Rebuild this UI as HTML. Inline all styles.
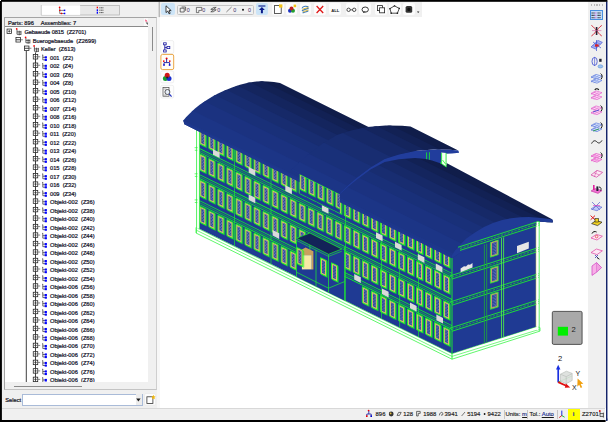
<!DOCTYPE html>
<html><head><meta charset="utf-8"><title>Model viewer</title>
<style>
*{margin:0;padding:0;box-sizing:border-box}
html,body{width:609px;height:422px;overflow:hidden;background:#fff}
body{position:relative;font-family:"Liberation Sans",sans-serif;font-size:5.7px;color:#1a1a2a;line-height:8px}
.abs{position:absolute}
.gl{position:absolute;width:0.8px;background:#444}
.eb{position:absolute;width:4.7px;height:4.7px;border:0.55px solid #666;background:#fff}
.eb i.h{position:absolute;left:0.55px;top:1.5px;width:2.5px;height:0.6px;background:#111}
.eb i.v{position:absolute;left:1.5px;top:0.55px;width:0.6px;height:2.5px;background:#111}
.dash{position:absolute;width:2.2px;height:0.8px;background:#555}
.ic{position:absolute;overflow:visible}
.tt{position:absolute;white-space:nowrap;height:8px;line-height:8px;color:#14142a;-webkit-text-stroke:0.22px #14142a}
.btn{position:absolute;background:#fcfcfc;border-radius:2px}
.sb{position:absolute;top:409px;height:10px;line-height:10px;font-size:5.9px;white-space:nowrap;color:#1a1a1a;-webkit-text-stroke:0.15px #1a1a1a}
</style></head><body>

<svg class="abs" style="left:0;top:0" width="609" height="422" viewBox="0 0 609 422">
<defs>
<clipPath id="cf"><polygon points="196.0,0.0 453.0,0.0 453.0,400.0 196.0,400.0"/></clipPath>
<g id="win"><rect x="0.9" y="-15.6" width="6" height="16" fill="none" stroke="#14f024" stroke-width="0.45"/><rect x="0" y="-16" width="6" height="16" fill="#d4bc6c" stroke="#10ff20" stroke-width="0.75"/><rect x="1.6" y="-14.4" width="2.8" height="12.8" fill="#1f3894"/><path d="M2.45 -14.1V-1.7M3.65 -14.1V-1.7" stroke="#a0acde" stroke-width="0.7" stroke-dasharray="0.7 0.8"/></g>
</defs>
<polygon points="196.0,227.4 452.0,353.6 536.5,326.6 540.0,327.6 540.0,331.1 452.0,359.2 196.0,233.0" fill="#fff" stroke="#1cf42c" stroke-width="0.7"/>
<path d="M196.0 230.0L452.0 356.4L540.0 329.2" stroke="#1cf42c" stroke-width="0.6" fill="none"/>
<g id="facade" clip-path="url(#cf)"><polygon points="197.0,227.4 452.0,353.6 452.0,249.2 197.0,123.0" fill="#1f3a93"/><g transform="matrix(1 0.4950 0 1 0 0)">
<use href="#win" x="199.80" y="123.3"/>
<use href="#win" x="208.83" y="123.3"/>
<use href="#win" x="217.86" y="123.3"/>
<use href="#win" x="226.89" y="123.3"/>
<use href="#win" x="235.92" y="123.3"/>
<use href="#win" x="244.95" y="123.3"/>
<use href="#win" x="253.98" y="123.3"/>
<use href="#win" x="263.01" y="123.3"/>
<use href="#win" x="272.04" y="123.3"/>
<use href="#win" x="281.07" y="123.3"/>
<use href="#win" x="290.10" y="123.3"/>
<use href="#win" x="299.13" y="123.3"/>
<use href="#win" x="308.16" y="123.3"/>
<use href="#win" x="317.19" y="123.3"/>
<use href="#win" x="326.22" y="123.3"/>
<use href="#win" x="335.25" y="123.3"/>
<use href="#win" x="362.34" y="123.3"/>
<use href="#win" x="371.37" y="123.3"/>
<use href="#win" x="380.40" y="123.3"/>
<use href="#win" x="389.43" y="123.3"/>
<use href="#win" x="398.46" y="123.3"/>
<use href="#win" x="407.49" y="123.3"/>
<use href="#win" x="416.52" y="123.3"/>
<use href="#win" x="425.55" y="123.3"/>
<use href="#win" x="434.58" y="123.3"/>
<use href="#win" x="443.61" y="123.3"/>
<path d="M196 105.8H453M196 101.9H453" stroke="#10ff20" stroke-width="0.85"/>
<path d="M196 103.9H453" stroke="#18d030" stroke-width="0.55"/>
<use href="#win" x="199.80" y="97.2"/>
<use href="#win" x="208.83" y="97.2"/>
<use href="#win" x="217.86" y="97.2"/>
<use href="#win" x="226.89" y="97.2"/>
<use href="#win" x="235.92" y="97.2"/>
<use href="#win" x="244.95" y="97.2"/>
<use href="#win" x="253.98" y="97.2"/>
<use href="#win" x="263.01" y="97.2"/>
<use href="#win" x="272.04" y="97.2"/>
<use href="#win" x="281.07" y="97.2"/>
<use href="#win" x="290.10" y="97.2"/>
<use href="#win" x="299.13" y="97.2"/>
<use href="#win" x="308.16" y="97.2"/>
<use href="#win" x="317.19" y="97.2"/>
<use href="#win" x="326.22" y="97.2"/>
<use href="#win" x="335.25" y="97.2"/>
<use href="#win" x="344.28" y="97.2"/>
<use href="#win" x="353.31" y="97.2"/>
<use href="#win" x="362.34" y="97.2"/>
<use href="#win" x="371.37" y="97.2"/>
<use href="#win" x="380.40" y="97.2"/>
<use href="#win" x="389.43" y="97.2"/>
<use href="#win" x="398.46" y="97.2"/>
<use href="#win" x="407.49" y="97.2"/>
<use href="#win" x="416.52" y="97.2"/>
<use href="#win" x="425.55" y="97.2"/>
<use href="#win" x="434.58" y="97.2"/>
<use href="#win" x="443.61" y="97.2"/>
<path d="M196 79.7H453M196 75.8H453" stroke="#10ff20" stroke-width="0.85"/>
<path d="M196 77.8H453" stroke="#18d030" stroke-width="0.55"/>
<use href="#win" x="199.80" y="71.1"/>
<use href="#win" x="208.83" y="71.1"/>
<use href="#win" x="217.86" y="71.1"/>
<use href="#win" x="226.89" y="71.1"/>
<use href="#win" x="235.92" y="71.1"/>
<use href="#win" x="244.95" y="71.1"/>
<use href="#win" x="253.98" y="71.1"/>
<use href="#win" x="263.01" y="71.1"/>
<use href="#win" x="272.04" y="71.1"/>
<use href="#win" x="281.07" y="71.1"/>
<use href="#win" x="290.10" y="71.1"/>
<use href="#win" x="299.13" y="71.1"/>
<use href="#win" x="308.16" y="71.1"/>
<use href="#win" x="317.19" y="71.1"/>
<use href="#win" x="326.22" y="71.1"/>
<use href="#win" x="335.25" y="71.1"/>
<use href="#win" x="344.28" y="71.1"/>
<use href="#win" x="353.31" y="71.1"/>
<use href="#win" x="362.34" y="71.1"/>
<use href="#win" x="371.37" y="71.1"/>
<use href="#win" x="380.40" y="71.1"/>
<use href="#win" x="389.43" y="71.1"/>
<use href="#win" x="398.46" y="71.1"/>
<use href="#win" x="407.49" y="71.1"/>
<use href="#win" x="416.52" y="71.1"/>
<use href="#win" x="425.55" y="71.1"/>
<use href="#win" x="434.58" y="71.1"/>
<use href="#win" x="443.61" y="71.1"/>
<path d="M196 53.6H453M196 49.7H453" stroke="#10ff20" stroke-width="0.85"/>
<path d="M196 51.7H453" stroke="#18d030" stroke-width="0.55"/>
<use href="#win" x="199.80" y="45.0"/>
<use href="#win" x="208.83" y="45.0"/>
<use href="#win" x="217.86" y="45.0"/>
<use href="#win" x="226.89" y="45.0"/>
<use href="#win" x="235.92" y="45.0"/>
<use href="#win" x="244.95" y="45.0"/>
<use href="#win" x="253.98" y="45.0"/>
<use href="#win" x="263.01" y="45.0"/>
<use href="#win" x="272.04" y="45.0"/>
<use href="#win" x="281.07" y="45.0"/>
<use href="#win" x="290.10" y="45.0"/>
<use href="#win" x="299.13" y="45.0"/>
<use href="#win" x="308.16" y="45.0"/>
<use href="#win" x="317.19" y="45.0"/>
<use href="#win" x="326.22" y="45.0"/>
<use href="#win" x="335.25" y="45.0"/>
<use href="#win" x="344.28" y="45.0"/>
<use href="#win" x="353.31" y="45.0"/>
<use href="#win" x="362.34" y="45.0"/>
<use href="#win" x="371.37" y="45.0"/>
<use href="#win" x="380.40" y="45.0"/>
<use href="#win" x="389.43" y="45.0"/>
<use href="#win" x="398.46" y="45.0"/>
<use href="#win" x="407.49" y="45.0"/>
<use href="#win" x="416.52" y="45.0"/>
<use href="#win" x="425.55" y="45.0"/>
<use href="#win" x="434.58" y="45.0"/>
<use href="#win" x="443.61" y="45.0"/>
<path d="M197.4 25.5V129.9" stroke="#1cf42c" stroke-width="0.55"/>
<path d="M234.5 25.5V129.9" stroke="#1cf42c" stroke-width="0.55"/>
<path d="M271.0 25.5V129.9" stroke="#1cf42c" stroke-width="0.55"/>
<path d="M345.5 25.5V129.9" stroke="#1cf42c" stroke-width="0.55"/>
<path d="M381.5 25.5V129.9" stroke="#1cf42c" stroke-width="0.55"/>
<path d="M399.6 25.5V129.9" stroke="#1cf42c" stroke-width="0.55"/>
<path d="M418.5 25.5V129.9" stroke="#1cf42c" stroke-width="0.55"/>
</g></g>
<polygon points="213.0,149.2 219.6,152.5 219.6,158.1 213.0,154.8" fill="#dadada"/>
<polygon points="248.7,167.0 255.3,170.3 255.3,175.9 248.7,172.6" fill="#dadada"/>
<polygon points="285.3,185.3 291.9,188.6 291.9,194.2 285.3,190.9" fill="#dadada"/>
<polygon points="248.7,194.4 255.3,197.7 255.3,203.3 248.7,200.0" fill="#dadada"/>
<polygon points="321.9,204.9 328.5,208.2 328.5,213.8 321.9,210.5" fill="#dadada"/>
<polygon points="376.0,232.3 382.6,235.6 382.6,241.2 376.0,237.9" fill="#dadada"/>
<polygon points="395.0,241.7 401.6,245.0 401.6,250.6 395.0,247.3" fill="#dadada"/>
<polygon points="417.8,254.0 424.4,257.3 424.4,262.9 417.8,259.6" fill="#dadada"/>
<polygon points="435.8,263.6 442.4,266.9 442.4,272.5 435.8,269.2" fill="#dadada"/>
<polygon points="354.2,274.0 360.8,277.3 360.8,282.9 354.2,279.6" fill="#dadada"/>
<polygon points="382.0,288.5 388.6,291.8 388.6,297.4 382.0,294.1" fill="#dadada"/>
<polygon points="410.0,302.6 416.6,305.9 416.6,311.5 410.0,308.2" fill="#dadada"/>
<polygon points="436.4,314.6 443.0,317.9 443.0,323.5 436.4,320.2" fill="#dadada"/>
<polygon points="272.6,230.0 279.2,233.3 279.2,238.9 272.6,235.6" fill="#dadada"/>
<rect x="196.6" y="130.6" width="2.8" height="98.0" fill="#f2fff2"/>
<path d="M196.5 130V233.0M199.5 131.5V228.6" stroke="#3cf04a" stroke-width="0.8"/>
<path d="M194.6 199.9h3M194.8 202.5h2.6" stroke="#30f03a" stroke-width="0.7"/>
<path d="M194.6 173.8h3M194.8 176.4h2.6" stroke="#30f03a" stroke-width="0.7"/>
<path d="M194.6 147.7h3M194.8 150.3h2.6" stroke="#30f03a" stroke-width="0.7"/>
<polygon points="296.5,238.3 309.9,233.0 344.5,250.3 344.5,300.6 296.5,276.8" fill="#1f3a93"/>
<path d="M296.5 240V276.6M316 250V286.4M328.5 254.3V292.6M344.5 247V300.6M309.9 236V250" stroke="#1cf42c" stroke-width="0.7" fill="none"/>
<path d="M296.5 272.2L328.5 288.2L344.5 281.6" stroke="#1cf42c" stroke-width="0.7" fill="none"/>
<polygon points="296.5,238.3 309.9,233.0 341.8,249.0 328.5,254.3" fill="#132358" stroke="#1cf42c" stroke-width="0.7"/>
<path d="M296.5 240.4L328.5 256.4L341.8 251.2" stroke="#1cf42c" stroke-width="0.6" fill="none"/>
<polygon points="301.9,249.4 305.6,247.4 313.4,251.2 313.4,269.6 311.6,269.4 311.6,255.2 301.9,255.2" fill="#c9a05e"/>
<rect x="301.9" y="255.2" width="9.7" height="14.2" fill="#f7e8a6"/>
<g transform="matrix(1 0.4950 0 1 0 0)">
<use href="#win" x="296.9" y="116.5"/>
<use href="#win" x="320.5" y="115.0"/>
<use href="#win" x="331.5" y="114.7"/>
</g>
<polygon points="452.0,353.6 536.0,326.7 536.0,214.3 452.0,249.2" fill="#1f3a93"/>
<g transform="matrix(1 -0.3200 0 1 0 0)"><path d="M450.0 472.1H539M452.0 475.9H539" stroke="#1cf42c" stroke-width="0.8"/><path d="M452.0 474.0H539" stroke="#22b83a" stroke-width="0.9" stroke-dasharray="2.2 1.2"/><path d="M450.0 446.0H539M452.0 449.8H539" stroke="#1cf42c" stroke-width="0.8"/><path d="M452.0 447.9H539" stroke="#22b83a" stroke-width="0.9" stroke-dasharray="2.2 1.2"/><path d="M450.0 419.9H539M452.0 423.7H539" stroke="#1cf42c" stroke-width="0.8"/><path d="M452.0 421.8H539" stroke="#22b83a" stroke-width="0.9" stroke-dasharray="2.2 1.2"/></g>
<g transform="matrix(1 -0.3200 0 1 0 0)">
<defs><g id="win2"><rect x="0" y="-15" width="7.8" height="15" fill="#b9a36a" stroke="#1cf42c" stroke-width="0.7"/><rect x="1.7" y="-13.5" width="4.4" height="12" fill="#223c98"/><path d="M2.7 -13V-1.8M3.9 -13V-1.8M5.1 -13V-1.8" stroke="#8b97cf" stroke-width="0.7" stroke-dasharray="0.7 0.8"/></g></defs>
<use href="#win2" x="490.4" y="466.3"/>
<use href="#win2" x="490.4" y="440.2"/>
<use href="#win2" x="490.4" y="414.1"/>
<path d="M484.4 389.9V498.3M486.7 389.9V498.3" stroke="#1fae35" stroke-width="0.7"/>
<path d="M501.5 389.9V498.3M503.6 389.9V498.3" stroke="#4fe84a" stroke-width="0.8"/>
</g>
<polygon points="460.6,268.4 464.0,266.2 466.0,266.6 468.0,264.4 470.0,264.8 472.5,263.0 472.5,267.4 460.6,272.2" fill="#e6e6e6"/>
<polygon points="517.0,246.0 528.8,241.8 528.8,248.6 517.0,253.2" fill="#e6e6e6"/>
<path d="M452 257.2V359.2" stroke="#1cf42c" stroke-width="0.9"/>
<path d="M536.2 222V327" stroke="#d8d070" stroke-width="0.8"/>
<path d="M537.5 222V330" stroke="#ffffff" stroke-width="1.8"/>
<path d="M539.2 221V331" stroke="#5cf06a" stroke-width="1.0"/>
<defs><clipPath id="cr"><polygon points="183.3,120.6 186.0,117.3 190.0,113.2 195.0,108.6 200.0,104.5 206.0,100.4 212.0,96.8 218.0,93.6 224.0,90.8 232.0,87.5 240.0,84.8 248.0,82.8 256.0,81.6 262.0,81.3 268.0,81.5 274.0,82.1 280.0,83.1 364.5,124.9 446.5,165.5 446.5,163.0 551.6,219.0 553.0,221.0 552.6,222.6 552.8,222.6 545.0,221.9 536.5,221.6 536.5,225.0 459.0,253.5 452.0,258.3 184.2,124.2"/></clipPath>
<clipPath id="cr2"><polygon points="291.7,170.0 292.9,168.6 300.2,161.6 308.5,154.3 322.7,143.6 336.9,135.0 351.1,130.6 367.2,127.1 385.6,125.4 402.2,125.7 410.5,126.5 458.3,150.5 450.0,149.7 433.4,149.4 415.0,151.1 398.9,154.6 384.7,159.0 370.5,167.6 356.3,178.3 348.0,185.6 340.7,192.6 339.5,194.0"/></clipPath>
<clipPath id="cbay"><polygon points="299.6,173.8 339.8,193.8 339.8,213.8 299.6,193.9"/></clipPath></defs>
<g clip-path="url(#cr)"><polygon points="170.0,23.9 570.0,221.8 570.0,234.9 170.0,37.0" fill="#101d4a"/><polygon points="170.0,35.2 570.0,233.1 570.0,242.4 170.0,44.5" fill="#122154"/><polygon points="170.0,42.7 570.0,240.6 570.0,252.0 170.0,54.1" fill="#14255e"/><polygon points="170.0,52.3 570.0,250.2 570.0,261.6 170.0,63.7" fill="#162968"/><polygon points="170.0,61.9 570.0,259.8 570.0,272.3 170.0,74.4" fill="#182d71"/><polygon points="170.0,72.6 570.0,270.5 570.0,284.0 170.0,86.1" fill="#193079"/><polygon points="170.0,84.3 570.0,282.2 570.0,299.0 170.0,101.1" fill="#1b3280"/><polygon points="170.0,99.3 570.0,297.2 570.0,313.1 170.0,115.2" fill="#1c3586"/><polygon points="170.0,113.4 570.0,311.3 570.0,323.6 170.0,125.7" fill="#1d378a"/></g>
<path d="M184.6 123.0 L452.3 257.0" stroke="#1e388f" stroke-width="2.4" fill="none"/>
<polygon points="452.0,255.2 455.0,250.5 459.0,246.0 466.0,238.8 475.0,232.4 484.0,227.0 493.0,223.0 502.2,219.9 511.0,218.2 520.3,217.2 529.0,217.1 538.3,217.7 546.0,218.6 552.6,219.6 552.8,222.6 545.0,221.9 536.5,221.6 536.5,225.0 459.0,253.5 452.0,258.3" fill="#203b96"/>
<g transform="matrix(1 -0.3200 0 1 0 0)"><path d="M458.0 393.8H539M460.0 397.6H539" stroke="#1cf42c" stroke-width="0.8"/><path d="M460.0 395.7H539" stroke="#22b83a" stroke-width="0.9" stroke-dasharray="2.2 1.2"/></g>
<path d="M537.5 221.8V226" stroke="#fff" stroke-width="1.8"/><path d="M539.2 221.6V226" stroke="#5cf06a" stroke-width="1"/>
<g clip-path="url(#cbay)"><use href="#facade" transform="translate(0.6,-4)"/></g>
<path d="M300 174.6L339 194" stroke="#1cf42c" stroke-width="0.9"/>
<g clip-path="url(#cr2)"><polygon points="280.0,58.3 470.0,152.3 470.0,166.2 280.0,72.1" fill="#101d4a"/><polygon points="280.0,70.3 470.0,164.3 470.0,174.2 280.0,80.1" fill="#122154"/><polygon points="280.0,78.3 470.0,172.3 470.0,183.2 280.0,89.1" fill="#14255e"/><polygon points="280.0,87.3 470.0,181.3 470.0,197.9 280.0,103.8" fill="#162968"/><polygon points="280.0,102.0 470.0,196.1 470.0,216.8 280.0,122.8" fill="#182d71"/><polygon points="280.0,121.0 470.0,215.0 470.0,235.3 280.0,141.3" fill="#193079"/><polygon points="280.0,139.5 470.0,233.5 470.0,248.2 280.0,154.1" fill="#1b3280"/><polygon points="280.0,152.3 470.0,246.3 470.0,258.8 280.0,164.7" fill="#1c3586"/><polygon points="280.0,162.9 470.0,256.9 470.0,274.1 280.0,180.1" fill="#1d378a"/></g>
<polygon points="339.5,194.0 340.7,192.6 348.0,185.6 356.3,178.3 370.5,167.6 384.7,159.0 398.9,154.6 415.0,151.1 433.4,149.4 450.0,149.7 458.3,150.5 459.2,152.8 452.0,153.6 446.2,153.8 446.2,167.0 441.0,163.4 432.0,160.4 426.0,158.9 415.0,158.0 398.9,159.2 384.7,162.0 370.5,169.6 356.3,180.0 348.0,186.8 340.7,193.3 339.5,194.6" fill="#213d9c"/>
<polygon points="441.4,152.6 446.2,153 446.2,167 441.4,163.6" fill="#f4fff4"/>
<path d="M426.6 152.4V159.2M429.4 152.2V159.8M441.6 153V163.8M446 153V167" stroke="#1cf42c" stroke-width="0.8"/>
<path d="M440 162.6L446.4 167M442.5 160l3 4" stroke="#1cf42c" stroke-width="0.8"/>
</svg>
<div class="abs" style="left:0;top:0;width:159.6px;height:408.3px;background:#f0f0f0"></div>
<div class="abs" style="left:157.3px;top:17px;width:3.2px;height:391px;background:#f7f7f7"></div>
<svg class="abs" style="left:38px;top:3px" width="86" height="15" viewBox="38 3 86 15">
<rect x="41.3" y="5.4" width="78.2" height="9.6" fill="#e8e8e8" stroke="#adadad" stroke-width="0.7"/>
<rect x="41.3" y="5.2" width="38.8" height="9.7" fill="#fff"/><path d="M41.3 5.2v9.8" stroke="#c4c4c4" stroke-width="0.7"/>
<path d="M59.7 7.6V13.5H64.6M59.7 10.4H64.6" stroke="#333" stroke-width="0.6" fill="none"/><circle cx="59.6" cy="7.3" r="0.85" fill="#f00"/><rect x="59.1" y="9.7" width="1.4" height="1.4" fill="#e00"/><rect x="60.8" y="12.7" width="1.4" height="1.5" fill="#e00"/><rect x="63.8" y="9.6" width="1.5" height="1.5" fill="#00f"/><rect x="63.8" y="12.7" width="1.5" height="1.5" fill="#00f"/>
<rect x="96.7" y="6.7" width="1.3" height="1.6" fill="#f00"/><rect x="96.7" y="9.3" width="1.3" height="1.9" fill="#00f"/><rect x="96.7" y="11.8" width="1.3" height="1.9" fill="#00f"/><path d="M99.4 7.8H103.4M99.4 10.2H103.4M99.4 12.6H103.4" stroke="#333" stroke-width="0.9" stroke-dasharray="1 0.5"/>
</svg>
<div class="abs" style="left:4.4px;top:17.4px;width:152.4px;height:373px;border:0.8px solid #a4a4a4;border-right-color:#cfcfcf;border-bottom-color:#c4c4c4;background:#f0f0f0"></div>
<div class="abs" style="left:5.2px;top:26.4px;width:142.8px;height:355.8px;background:#fff;overflow:hidden"></div>
<div class="abs" style="left:5.2px;top:25.9px;width:142.8px;height:0.8px;background:#8a8a8a"></div>
<div class="abs" style="left:143.6px;top:18.5px;width:0.7px;height:7.6px;background:#b0b0b0"></div>
<svg class="abs" style="left:143px;top:17px" width="8" height="10" viewBox="143 17 8 10"><rect x="144" y="18.2" width="4" height="7.8" fill="#fafafa"/><path d="M145.4 19.2l2.2 2.4h-2.2z" fill="#f03060"/><path d="M145.6 22.4h2.2v2.6z" fill="#444"/></svg>
<div class="tt" style="left:7.9px;top:18.6px;color:#222">Parts: 896</div><div class="tt" style="left:40.7px;top:18.6px;color:#222">Assemblies: 7</div>
<div class="abs" style="left:152px;top:27.3px;width:0.9px;height:23.7px;background:#8a8a8a"></div>
<div class="abs" style="left:14.2px;top:386px;width:68px;height:0.8px;background:#8a8a8a"></div>
<div class="abs" style="left:0;top:0;width:148px;height:382.2px;overflow:hidden">
<svg class="abs" style="left:0;top:0" width="150" height="383" viewBox="0 0 150 383">
<path d="M26.3 50.6V383M35.5 52.4V383" stroke="#2a2a2a" stroke-width="0.9" fill="none"/>
<rect x="7.05" y="29.05" width="4.5" height="4.5" fill="#fff" stroke="#1e1e1e" stroke-width="0.75"/>
<path d="M8.00 31.30h2.6M9.30 30.00v2.6" stroke="#111" stroke-width="0.6"/>
<circle cx="16.70" cy="28.90" r="0.85" fill="#f00"/>
<path d="M17.00 29.70v4.6h4M17.00 31.90h4M19.20 30.70v4.6M21.00 30.90v4" stroke="#222" stroke-width="0.7" fill="none"/>
<rect x="15.95" y="37.54" width="4.5" height="4.5" fill="#fff" stroke="#1e1e1e" stroke-width="0.75"/>
<path d="M16.00 39.79h4.4" stroke="#111" stroke-width="0.8"/>
<path d="M20.50 39.79h2.4" stroke="#555" stroke-width="0.7"/>
<circle cx="25.60" cy="37.39" r="0.85" fill="#f00"/>
<path d="M25.90 38.19v4.6h4M25.90 40.39h4M28.10 39.19v4.6M29.90 39.39v4" stroke="#222" stroke-width="0.7" fill="none"/>
<rect x="24.45" y="46.03" width="4.5" height="4.5" fill="#fff" stroke="#1e1e1e" stroke-width="0.75"/>
<path d="M24.50 48.28h4.4" stroke="#111" stroke-width="0.8"/>
<path d="M29.00 48.28h2.4" stroke="#555" stroke-width="0.7"/>
<circle cx="34.10" cy="45.88" r="0.85" fill="#f00"/>
<path d="M34.40 46.68v4.6h4M34.40 48.88h4M36.60 47.68v4.6M38.40 47.88v4" stroke="#222" stroke-width="0.7" fill="none"/>
<rect x="33.25" y="54.52" width="4.5" height="4.5" fill="#fff" stroke="#1e1e1e" stroke-width="0.75"/>
<path d="M34.20 56.77h2.6M35.50 55.47v2.6" stroke="#111" stroke-width="0.6"/>
<path d="M35.5 54.52v4.5" stroke="#3a3a3a" stroke-width="0.7"/>
<path d="M37.80 56.77h2.4" stroke="#555" stroke-width="0.7"/>
<path d="M42.10 55.37l0.7-0.5v5h2.2M42.80 57.37h2.2" stroke="#222" stroke-width="0.65" fill="none"/>
<rect x="44.70" y="56.27" width="2.2" height="2.1" fill="#00f"/><rect x="44.70" y="58.87" width="2.2" height="2.1" fill="#00f"/>
<rect x="33.25" y="63.01" width="4.5" height="4.5" fill="#fff" stroke="#1e1e1e" stroke-width="0.75"/>
<path d="M34.20 65.26h2.6M35.50 63.96v2.6" stroke="#111" stroke-width="0.6"/>
<path d="M35.5 63.01v4.5" stroke="#3a3a3a" stroke-width="0.7"/>
<path d="M37.80 65.26h2.4" stroke="#555" stroke-width="0.7"/>
<path d="M42.10 63.86l0.7-0.5v5h2.2M42.80 65.86h2.2" stroke="#222" stroke-width="0.65" fill="none"/>
<rect x="44.70" y="64.76" width="2.2" height="2.1" fill="#00f"/><rect x="44.70" y="67.36" width="2.2" height="2.1" fill="#00f"/>
<rect x="33.25" y="71.50" width="4.5" height="4.5" fill="#fff" stroke="#1e1e1e" stroke-width="0.75"/>
<path d="M34.20 73.75h2.6M35.50 72.45v2.6" stroke="#111" stroke-width="0.6"/>
<path d="M35.5 71.50v4.5" stroke="#3a3a3a" stroke-width="0.7"/>
<path d="M37.80 73.75h2.4" stroke="#555" stroke-width="0.7"/>
<path d="M42.10 72.35l0.7-0.5v5h2.2M42.80 74.35h2.2" stroke="#222" stroke-width="0.65" fill="none"/>
<rect x="44.70" y="73.25" width="2.2" height="2.1" fill="#00f"/><rect x="44.70" y="75.85" width="2.2" height="2.1" fill="#00f"/>
<rect x="33.25" y="79.99" width="4.5" height="4.5" fill="#fff" stroke="#1e1e1e" stroke-width="0.75"/>
<path d="M34.20 82.24h2.6M35.50 80.94v2.6" stroke="#111" stroke-width="0.6"/>
<path d="M35.5 79.99v4.5" stroke="#3a3a3a" stroke-width="0.7"/>
<path d="M37.80 82.24h2.4" stroke="#555" stroke-width="0.7"/>
<path d="M42.10 80.84l0.7-0.5v5h2.2M42.80 82.84h2.2" stroke="#222" stroke-width="0.65" fill="none"/>
<rect x="44.70" y="81.74" width="2.2" height="2.1" fill="#00f"/><rect x="44.70" y="84.34" width="2.2" height="2.1" fill="#00f"/>
<rect x="33.25" y="88.48" width="4.5" height="4.5" fill="#fff" stroke="#1e1e1e" stroke-width="0.75"/>
<path d="M34.20 90.73h2.6M35.50 89.43v2.6" stroke="#111" stroke-width="0.6"/>
<path d="M35.5 88.48v4.5" stroke="#3a3a3a" stroke-width="0.7"/>
<path d="M37.80 90.73h2.4" stroke="#555" stroke-width="0.7"/>
<path d="M42.10 89.33l0.7-0.5v5h2.2M42.80 91.33h2.2" stroke="#222" stroke-width="0.65" fill="none"/>
<rect x="44.70" y="90.23" width="2.2" height="2.1" fill="#00f"/><rect x="44.70" y="92.83" width="2.2" height="2.1" fill="#00f"/>
<rect x="33.25" y="96.97" width="4.5" height="4.5" fill="#fff" stroke="#1e1e1e" stroke-width="0.75"/>
<path d="M34.20 99.22h2.6M35.50 97.92v2.6" stroke="#111" stroke-width="0.6"/>
<path d="M35.5 96.97v4.5" stroke="#3a3a3a" stroke-width="0.7"/>
<path d="M37.80 99.22h2.4" stroke="#555" stroke-width="0.7"/>
<path d="M42.10 97.82l0.7-0.5v5h2.2M42.80 99.82h2.2" stroke="#222" stroke-width="0.65" fill="none"/>
<rect x="44.70" y="98.72" width="2.2" height="2.1" fill="#00f"/><rect x="44.70" y="101.32" width="2.2" height="2.1" fill="#00f"/>
<rect x="33.25" y="105.46" width="4.5" height="4.5" fill="#fff" stroke="#1e1e1e" stroke-width="0.75"/>
<path d="M34.20 107.71h2.6M35.50 106.41v2.6" stroke="#111" stroke-width="0.6"/>
<path d="M35.5 105.46v4.5" stroke="#3a3a3a" stroke-width="0.7"/>
<path d="M37.80 107.71h2.4" stroke="#555" stroke-width="0.7"/>
<path d="M42.10 106.31l0.7-0.5v5h2.2M42.80 108.31h2.2" stroke="#222" stroke-width="0.65" fill="none"/>
<rect x="44.70" y="107.21" width="2.2" height="2.1" fill="#00f"/><rect x="44.70" y="109.81" width="2.2" height="2.1" fill="#00f"/>
<rect x="33.25" y="113.95" width="4.5" height="4.5" fill="#fff" stroke="#1e1e1e" stroke-width="0.75"/>
<path d="M34.20 116.20h2.6M35.50 114.90v2.6" stroke="#111" stroke-width="0.6"/>
<path d="M35.5 113.95v4.5" stroke="#3a3a3a" stroke-width="0.7"/>
<path d="M37.80 116.20h2.4" stroke="#555" stroke-width="0.7"/>
<path d="M42.10 114.80l0.7-0.5v5h2.2M42.80 116.80h2.2" stroke="#222" stroke-width="0.65" fill="none"/>
<rect x="44.70" y="115.70" width="2.2" height="2.1" fill="#00f"/><rect x="44.70" y="118.30" width="2.2" height="2.1" fill="#00f"/>
<rect x="33.25" y="122.44" width="4.5" height="4.5" fill="#fff" stroke="#1e1e1e" stroke-width="0.75"/>
<path d="M34.20 124.69h2.6M35.50 123.39v2.6" stroke="#111" stroke-width="0.6"/>
<path d="M35.5 122.44v4.5" stroke="#3a3a3a" stroke-width="0.7"/>
<path d="M37.80 124.69h2.4" stroke="#555" stroke-width="0.7"/>
<path d="M42.10 123.29l0.7-0.5v5h2.2M42.80 125.29h2.2" stroke="#222" stroke-width="0.65" fill="none"/>
<rect x="44.70" y="124.19" width="2.2" height="2.1" fill="#00f"/><rect x="44.70" y="126.79" width="2.2" height="2.1" fill="#00f"/>
<rect x="33.25" y="130.93" width="4.5" height="4.5" fill="#fff" stroke="#1e1e1e" stroke-width="0.75"/>
<path d="M34.20 133.18h2.6M35.50 131.88v2.6" stroke="#111" stroke-width="0.6"/>
<path d="M35.5 130.93v4.5" stroke="#3a3a3a" stroke-width="0.7"/>
<path d="M37.80 133.18h2.4" stroke="#555" stroke-width="0.7"/>
<path d="M42.10 131.78l0.7-0.5v5h2.2M42.80 133.78h2.2" stroke="#222" stroke-width="0.65" fill="none"/>
<rect x="44.70" y="132.68" width="2.2" height="2.1" fill="#00f"/><rect x="44.70" y="135.28" width="2.2" height="2.1" fill="#00f"/>
<rect x="33.25" y="139.42" width="4.5" height="4.5" fill="#fff" stroke="#1e1e1e" stroke-width="0.75"/>
<path d="M34.20 141.67h2.6M35.50 140.37v2.6" stroke="#111" stroke-width="0.6"/>
<path d="M35.5 139.42v4.5" stroke="#3a3a3a" stroke-width="0.7"/>
<path d="M37.80 141.67h2.4" stroke="#555" stroke-width="0.7"/>
<path d="M42.10 140.27l0.7-0.5v5h2.2M42.80 142.27h2.2" stroke="#222" stroke-width="0.65" fill="none"/>
<rect x="44.70" y="141.17" width="2.2" height="2.1" fill="#00f"/><rect x="44.70" y="143.77" width="2.2" height="2.1" fill="#00f"/>
<rect x="33.25" y="147.91" width="4.5" height="4.5" fill="#fff" stroke="#1e1e1e" stroke-width="0.75"/>
<path d="M34.20 150.16h2.6M35.50 148.86v2.6" stroke="#111" stroke-width="0.6"/>
<path d="M35.5 147.91v4.5" stroke="#3a3a3a" stroke-width="0.7"/>
<path d="M37.80 150.16h2.4" stroke="#555" stroke-width="0.7"/>
<path d="M42.10 148.76l0.7-0.5v5h2.2M42.80 150.76h2.2" stroke="#222" stroke-width="0.65" fill="none"/>
<rect x="44.70" y="149.66" width="2.2" height="2.1" fill="#00f"/><rect x="44.70" y="152.26" width="2.2" height="2.1" fill="#00f"/>
<rect x="33.25" y="156.40" width="4.5" height="4.5" fill="#fff" stroke="#1e1e1e" stroke-width="0.75"/>
<path d="M34.20 158.65h2.6M35.50 157.35v2.6" stroke="#111" stroke-width="0.6"/>
<path d="M35.5 156.40v4.5" stroke="#3a3a3a" stroke-width="0.7"/>
<path d="M37.80 158.65h2.4" stroke="#555" stroke-width="0.7"/>
<path d="M42.10 157.25l0.7-0.5v5h2.2M42.80 159.25h2.2" stroke="#222" stroke-width="0.65" fill="none"/>
<rect x="44.70" y="158.15" width="2.2" height="2.1" fill="#00f"/><rect x="44.70" y="160.75" width="2.2" height="2.1" fill="#00f"/>
<rect x="33.25" y="164.89" width="4.5" height="4.5" fill="#fff" stroke="#1e1e1e" stroke-width="0.75"/>
<path d="M34.20 167.14h2.6M35.50 165.84v2.6" stroke="#111" stroke-width="0.6"/>
<path d="M35.5 164.89v4.5" stroke="#3a3a3a" stroke-width="0.7"/>
<path d="M37.80 167.14h2.4" stroke="#555" stroke-width="0.7"/>
<path d="M42.10 165.74l0.7-0.5v5h2.2M42.80 167.74h2.2" stroke="#222" stroke-width="0.65" fill="none"/>
<rect x="44.70" y="166.64" width="2.2" height="2.1" fill="#00f"/><rect x="44.70" y="169.24" width="2.2" height="2.1" fill="#00f"/>
<rect x="33.25" y="173.38" width="4.5" height="4.5" fill="#fff" stroke="#1e1e1e" stroke-width="0.75"/>
<path d="M34.20 175.63h2.6M35.50 174.33v2.6" stroke="#111" stroke-width="0.6"/>
<path d="M35.5 173.38v4.5" stroke="#3a3a3a" stroke-width="0.7"/>
<path d="M37.80 175.63h2.4" stroke="#555" stroke-width="0.7"/>
<path d="M42.10 174.23l0.7-0.5v5h2.2M42.80 176.23h2.2" stroke="#222" stroke-width="0.65" fill="none"/>
<rect x="44.70" y="175.13" width="2.2" height="2.1" fill="#00f"/><rect x="44.70" y="177.73" width="2.2" height="2.1" fill="#00f"/>
<rect x="33.25" y="181.87" width="4.5" height="4.5" fill="#fff" stroke="#1e1e1e" stroke-width="0.75"/>
<path d="M34.20 184.12h2.6M35.50 182.82v2.6" stroke="#111" stroke-width="0.6"/>
<path d="M35.5 181.87v4.5" stroke="#3a3a3a" stroke-width="0.7"/>
<path d="M37.80 184.12h2.4" stroke="#555" stroke-width="0.7"/>
<path d="M42.10 182.72l0.7-0.5v5h2.2M42.80 184.72h2.2" stroke="#222" stroke-width="0.65" fill="none"/>
<rect x="44.70" y="183.62" width="2.2" height="2.1" fill="#00f"/><rect x="44.70" y="186.22" width="2.2" height="2.1" fill="#00f"/>
<rect x="33.25" y="190.36" width="4.5" height="4.5" fill="#fff" stroke="#1e1e1e" stroke-width="0.75"/>
<path d="M34.20 192.61h2.6M35.50 191.31v2.6" stroke="#111" stroke-width="0.6"/>
<path d="M35.5 190.36v4.5" stroke="#3a3a3a" stroke-width="0.7"/>
<path d="M37.80 192.61h2.4" stroke="#555" stroke-width="0.7"/>
<path d="M42.10 191.21l0.7-0.5v5h2.2M42.80 193.21h2.2" stroke="#222" stroke-width="0.65" fill="none"/>
<rect x="44.70" y="192.11" width="2.2" height="2.1" fill="#00f"/><rect x="44.70" y="194.71" width="2.2" height="2.1" fill="#00f"/>
<rect x="33.25" y="198.85" width="4.5" height="4.5" fill="#fff" stroke="#1e1e1e" stroke-width="0.75"/>
<path d="M34.20 201.10h2.6M35.50 199.80v2.6" stroke="#111" stroke-width="0.6"/>
<path d="M35.5 198.85v4.5" stroke="#3a3a3a" stroke-width="0.7"/>
<path d="M37.80 201.10h2.4" stroke="#555" stroke-width="0.7"/>
<path d="M42.10 199.70l0.7-0.5v5h2.2M42.80 201.70h2.2" stroke="#222" stroke-width="0.65" fill="none"/>
<rect x="44.70" y="200.60" width="2.2" height="2.1" fill="#00f"/><rect x="44.70" y="203.20" width="2.2" height="2.1" fill="#00f"/>
<rect x="33.25" y="207.34" width="4.5" height="4.5" fill="#fff" stroke="#1e1e1e" stroke-width="0.75"/>
<path d="M34.20 209.59h2.6M35.50 208.29v2.6" stroke="#111" stroke-width="0.6"/>
<path d="M35.5 207.34v4.5" stroke="#3a3a3a" stroke-width="0.7"/>
<path d="M37.80 209.59h2.4" stroke="#555" stroke-width="0.7"/>
<path d="M42.10 208.19l0.7-0.5v5h2.2M42.80 210.19h2.2" stroke="#222" stroke-width="0.65" fill="none"/>
<rect x="44.70" y="209.09" width="2.2" height="2.1" fill="#00f"/><rect x="44.70" y="211.69" width="2.2" height="2.1" fill="#00f"/>
<rect x="33.25" y="215.83" width="4.5" height="4.5" fill="#fff" stroke="#1e1e1e" stroke-width="0.75"/>
<path d="M34.20 218.08h2.6M35.50 216.78v2.6" stroke="#111" stroke-width="0.6"/>
<path d="M35.5 215.83v4.5" stroke="#3a3a3a" stroke-width="0.7"/>
<path d="M37.80 218.08h2.4" stroke="#555" stroke-width="0.7"/>
<path d="M42.10 216.68l0.7-0.5v5h2.2M42.80 218.68h2.2" stroke="#222" stroke-width="0.65" fill="none"/>
<rect x="44.70" y="217.58" width="2.2" height="2.1" fill="#00f"/><rect x="44.70" y="220.18" width="2.2" height="2.1" fill="#00f"/>
<rect x="33.25" y="224.32" width="4.5" height="4.5" fill="#fff" stroke="#1e1e1e" stroke-width="0.75"/>
<path d="M34.20 226.57h2.6M35.50 225.27v2.6" stroke="#111" stroke-width="0.6"/>
<path d="M35.5 224.32v4.5" stroke="#3a3a3a" stroke-width="0.7"/>
<path d="M37.80 226.57h2.4" stroke="#555" stroke-width="0.7"/>
<path d="M42.10 225.17l0.7-0.5v5h2.2M42.80 227.17h2.2" stroke="#222" stroke-width="0.65" fill="none"/>
<rect x="44.70" y="226.07" width="2.2" height="2.1" fill="#00f"/><rect x="44.70" y="228.67" width="2.2" height="2.1" fill="#00f"/>
<rect x="33.25" y="232.81" width="4.5" height="4.5" fill="#fff" stroke="#1e1e1e" stroke-width="0.75"/>
<path d="M34.20 235.06h2.6M35.50 233.76v2.6" stroke="#111" stroke-width="0.6"/>
<path d="M35.5 232.81v4.5" stroke="#3a3a3a" stroke-width="0.7"/>
<path d="M37.80 235.06h2.4" stroke="#555" stroke-width="0.7"/>
<path d="M42.10 233.66l0.7-0.5v5h2.2M42.80 235.66h2.2" stroke="#222" stroke-width="0.65" fill="none"/>
<rect x="44.70" y="234.56" width="2.2" height="2.1" fill="#00f"/><rect x="44.70" y="237.16" width="2.2" height="2.1" fill="#00f"/>
<rect x="33.25" y="241.30" width="4.5" height="4.5" fill="#fff" stroke="#1e1e1e" stroke-width="0.75"/>
<path d="M34.20 243.55h2.6M35.50 242.25v2.6" stroke="#111" stroke-width="0.6"/>
<path d="M35.5 241.30v4.5" stroke="#3a3a3a" stroke-width="0.7"/>
<path d="M37.80 243.55h2.4" stroke="#555" stroke-width="0.7"/>
<path d="M42.10 242.15l0.7-0.5v5h2.2M42.80 244.15h2.2" stroke="#222" stroke-width="0.65" fill="none"/>
<rect x="44.70" y="243.05" width="2.2" height="2.1" fill="#00f"/><rect x="44.70" y="245.65" width="2.2" height="2.1" fill="#00f"/>
<rect x="33.25" y="249.79" width="4.5" height="4.5" fill="#fff" stroke="#1e1e1e" stroke-width="0.75"/>
<path d="M34.20 252.04h2.6M35.50 250.74v2.6" stroke="#111" stroke-width="0.6"/>
<path d="M35.5 249.79v4.5" stroke="#3a3a3a" stroke-width="0.7"/>
<path d="M37.80 252.04h2.4" stroke="#555" stroke-width="0.7"/>
<path d="M42.10 250.64l0.7-0.5v5h2.2M42.80 252.64h2.2" stroke="#222" stroke-width="0.65" fill="none"/>
<rect x="44.70" y="251.54" width="2.2" height="2.1" fill="#00f"/><rect x="44.70" y="254.14" width="2.2" height="2.1" fill="#00f"/>
<rect x="33.25" y="258.28" width="4.5" height="4.5" fill="#fff" stroke="#1e1e1e" stroke-width="0.75"/>
<path d="M34.20 260.53h2.6M35.50 259.23v2.6" stroke="#111" stroke-width="0.6"/>
<path d="M35.5 258.28v4.5" stroke="#3a3a3a" stroke-width="0.7"/>
<path d="M37.80 260.53h2.4" stroke="#555" stroke-width="0.7"/>
<path d="M42.10 259.13l0.7-0.5v5h2.2M42.80 261.13h2.2" stroke="#222" stroke-width="0.65" fill="none"/>
<rect x="44.70" y="260.03" width="2.2" height="2.1" fill="#00f"/><rect x="44.70" y="262.63" width="2.2" height="2.1" fill="#00f"/>
<rect x="33.25" y="266.77" width="4.5" height="4.5" fill="#fff" stroke="#1e1e1e" stroke-width="0.75"/>
<path d="M34.20 269.02h2.6M35.50 267.72v2.6" stroke="#111" stroke-width="0.6"/>
<path d="M35.5 266.77v4.5" stroke="#3a3a3a" stroke-width="0.7"/>
<path d="M37.80 269.02h2.4" stroke="#555" stroke-width="0.7"/>
<path d="M42.10 267.62l0.7-0.5v5h2.2M42.80 269.62h2.2" stroke="#222" stroke-width="0.65" fill="none"/>
<rect x="44.70" y="268.52" width="2.2" height="2.1" fill="#00f"/><rect x="44.70" y="271.12" width="2.2" height="2.1" fill="#00f"/>
<rect x="33.25" y="275.26" width="4.5" height="4.5" fill="#fff" stroke="#1e1e1e" stroke-width="0.75"/>
<path d="M34.20 277.51h2.6M35.50 276.21v2.6" stroke="#111" stroke-width="0.6"/>
<path d="M35.5 275.26v4.5" stroke="#3a3a3a" stroke-width="0.7"/>
<path d="M37.80 277.51h2.4" stroke="#555" stroke-width="0.7"/>
<path d="M42.10 276.11l0.7-0.5v5h2.2M42.80 278.11h2.2" stroke="#222" stroke-width="0.65" fill="none"/>
<rect x="44.70" y="277.01" width="2.2" height="2.1" fill="#00f"/><rect x="44.70" y="279.61" width="2.2" height="2.1" fill="#00f"/>
<rect x="33.25" y="283.75" width="4.5" height="4.5" fill="#fff" stroke="#1e1e1e" stroke-width="0.75"/>
<path d="M34.20 286.00h2.6M35.50 284.70v2.6" stroke="#111" stroke-width="0.6"/>
<path d="M35.5 283.75v4.5" stroke="#3a3a3a" stroke-width="0.7"/>
<path d="M37.80 286.00h2.4" stroke="#555" stroke-width="0.7"/>
<path d="M42.10 284.60l0.7-0.5v5h2.2M42.80 286.60h2.2" stroke="#222" stroke-width="0.65" fill="none"/>
<rect x="44.70" y="285.50" width="2.2" height="2.1" fill="#00f"/><rect x="44.70" y="288.10" width="2.2" height="2.1" fill="#00f"/>
<rect x="33.25" y="292.24" width="4.5" height="4.5" fill="#fff" stroke="#1e1e1e" stroke-width="0.75"/>
<path d="M34.20 294.49h2.6M35.50 293.19v2.6" stroke="#111" stroke-width="0.6"/>
<path d="M35.5 292.24v4.5" stroke="#3a3a3a" stroke-width="0.7"/>
<path d="M37.80 294.49h2.4" stroke="#555" stroke-width="0.7"/>
<path d="M42.10 293.09l0.7-0.5v5h2.2M42.80 295.09h2.2" stroke="#222" stroke-width="0.65" fill="none"/>
<rect x="44.70" y="293.99" width="2.2" height="2.1" fill="#00f"/><rect x="44.70" y="296.59" width="2.2" height="2.1" fill="#00f"/>
<rect x="33.25" y="300.73" width="4.5" height="4.5" fill="#fff" stroke="#1e1e1e" stroke-width="0.75"/>
<path d="M34.20 302.98h2.6M35.50 301.68v2.6" stroke="#111" stroke-width="0.6"/>
<path d="M35.5 300.73v4.5" stroke="#3a3a3a" stroke-width="0.7"/>
<path d="M37.80 302.98h2.4" stroke="#555" stroke-width="0.7"/>
<path d="M42.10 301.58l0.7-0.5v5h2.2M42.80 303.58h2.2" stroke="#222" stroke-width="0.65" fill="none"/>
<rect x="44.70" y="302.48" width="2.2" height="2.1" fill="#00f"/><rect x="44.70" y="305.08" width="2.2" height="2.1" fill="#00f"/>
<rect x="33.25" y="309.22" width="4.5" height="4.5" fill="#fff" stroke="#1e1e1e" stroke-width="0.75"/>
<path d="M34.20 311.47h2.6M35.50 310.17v2.6" stroke="#111" stroke-width="0.6"/>
<path d="M35.5 309.22v4.5" stroke="#3a3a3a" stroke-width="0.7"/>
<path d="M37.80 311.47h2.4" stroke="#555" stroke-width="0.7"/>
<path d="M42.10 310.07l0.7-0.5v5h2.2M42.80 312.07h2.2" stroke="#222" stroke-width="0.65" fill="none"/>
<rect x="44.70" y="310.97" width="2.2" height="2.1" fill="#00f"/><rect x="44.70" y="313.57" width="2.2" height="2.1" fill="#00f"/>
<rect x="33.25" y="317.71" width="4.5" height="4.5" fill="#fff" stroke="#1e1e1e" stroke-width="0.75"/>
<path d="M34.20 319.96h2.6M35.50 318.66v2.6" stroke="#111" stroke-width="0.6"/>
<path d="M35.5 317.71v4.5" stroke="#3a3a3a" stroke-width="0.7"/>
<path d="M37.80 319.96h2.4" stroke="#555" stroke-width="0.7"/>
<path d="M42.10 318.56l0.7-0.5v5h2.2M42.80 320.56h2.2" stroke="#222" stroke-width="0.65" fill="none"/>
<rect x="44.70" y="319.46" width="2.2" height="2.1" fill="#00f"/><rect x="44.70" y="322.06" width="2.2" height="2.1" fill="#00f"/>
<rect x="33.25" y="326.20" width="4.5" height="4.5" fill="#fff" stroke="#1e1e1e" stroke-width="0.75"/>
<path d="M34.20 328.45h2.6M35.50 327.15v2.6" stroke="#111" stroke-width="0.6"/>
<path d="M35.5 326.20v4.5" stroke="#3a3a3a" stroke-width="0.7"/>
<path d="M37.80 328.45h2.4" stroke="#555" stroke-width="0.7"/>
<path d="M42.10 327.05l0.7-0.5v5h2.2M42.80 329.05h2.2" stroke="#222" stroke-width="0.65" fill="none"/>
<rect x="44.70" y="327.95" width="2.2" height="2.1" fill="#00f"/><rect x="44.70" y="330.55" width="2.2" height="2.1" fill="#00f"/>
<rect x="33.25" y="334.69" width="4.5" height="4.5" fill="#fff" stroke="#1e1e1e" stroke-width="0.75"/>
<path d="M34.20 336.94h2.6M35.50 335.64v2.6" stroke="#111" stroke-width="0.6"/>
<path d="M35.5 334.69v4.5" stroke="#3a3a3a" stroke-width="0.7"/>
<path d="M37.80 336.94h2.4" stroke="#555" stroke-width="0.7"/>
<path d="M42.10 335.54l0.7-0.5v5h2.2M42.80 337.54h2.2" stroke="#222" stroke-width="0.65" fill="none"/>
<rect x="44.70" y="336.44" width="2.2" height="2.1" fill="#00f"/><rect x="44.70" y="339.04" width="2.2" height="2.1" fill="#00f"/>
<rect x="33.25" y="343.18" width="4.5" height="4.5" fill="#fff" stroke="#1e1e1e" stroke-width="0.75"/>
<path d="M34.20 345.43h2.6M35.50 344.13v2.6" stroke="#111" stroke-width="0.6"/>
<path d="M35.5 343.18v4.5" stroke="#3a3a3a" stroke-width="0.7"/>
<path d="M37.80 345.43h2.4" stroke="#555" stroke-width="0.7"/>
<path d="M42.10 344.03l0.7-0.5v5h2.2M42.80 346.03h2.2" stroke="#222" stroke-width="0.65" fill="none"/>
<rect x="44.70" y="344.93" width="2.2" height="2.1" fill="#00f"/><rect x="44.70" y="347.53" width="2.2" height="2.1" fill="#00f"/>
<rect x="33.25" y="351.67" width="4.5" height="4.5" fill="#fff" stroke="#1e1e1e" stroke-width="0.75"/>
<path d="M34.20 353.92h2.6M35.50 352.62v2.6" stroke="#111" stroke-width="0.6"/>
<path d="M35.5 351.67v4.5" stroke="#3a3a3a" stroke-width="0.7"/>
<path d="M37.80 353.92h2.4" stroke="#555" stroke-width="0.7"/>
<path d="M42.10 352.52l0.7-0.5v5h2.2M42.80 354.52h2.2" stroke="#222" stroke-width="0.65" fill="none"/>
<rect x="44.70" y="353.42" width="2.2" height="2.1" fill="#00f"/><rect x="44.70" y="356.02" width="2.2" height="2.1" fill="#00f"/>
<rect x="33.25" y="360.16" width="4.5" height="4.5" fill="#fff" stroke="#1e1e1e" stroke-width="0.75"/>
<path d="M34.20 362.41h2.6M35.50 361.11v2.6" stroke="#111" stroke-width="0.6"/>
<path d="M35.5 360.16v4.5" stroke="#3a3a3a" stroke-width="0.7"/>
<path d="M37.80 362.41h2.4" stroke="#555" stroke-width="0.7"/>
<path d="M42.10 361.01l0.7-0.5v5h2.2M42.80 363.01h2.2" stroke="#222" stroke-width="0.65" fill="none"/>
<rect x="44.70" y="361.91" width="2.2" height="2.1" fill="#00f"/><rect x="44.70" y="364.51" width="2.2" height="2.1" fill="#00f"/>
<rect x="33.25" y="368.65" width="4.5" height="4.5" fill="#fff" stroke="#1e1e1e" stroke-width="0.75"/>
<path d="M34.20 370.90h2.6M35.50 369.60v2.6" stroke="#111" stroke-width="0.6"/>
<path d="M35.5 368.65v4.5" stroke="#3a3a3a" stroke-width="0.7"/>
<path d="M37.80 370.90h2.4" stroke="#555" stroke-width="0.7"/>
<path d="M42.10 369.50l0.7-0.5v5h2.2M42.80 371.50h2.2" stroke="#222" stroke-width="0.65" fill="none"/>
<rect x="44.70" y="370.40" width="2.2" height="2.1" fill="#00f"/><rect x="44.70" y="373.00" width="2.2" height="2.1" fill="#00f"/>
<rect x="33.25" y="377.14" width="4.5" height="4.5" fill="#fff" stroke="#1e1e1e" stroke-width="0.75"/>
<path d="M34.20 379.39h2.6M35.50 378.09v2.6" stroke="#111" stroke-width="0.6"/>
<path d="M35.5 377.14v4.5" stroke="#3a3a3a" stroke-width="0.7"/>
<path d="M37.80 379.39h2.4" stroke="#555" stroke-width="0.7"/>
<path d="M42.10 377.99l0.7-0.5v5h2.2M42.80 379.99h2.2" stroke="#222" stroke-width="0.65" fill="none"/>
<rect x="44.70" y="378.89" width="2.2" height="2.1" fill="#00f"/><rect x="44.70" y="381.49" width="2.2" height="2.1" fill="#00f"/>
</svg>
<div class="tt" style="left:24.4px;top:28.3px;letter-spacing:-0.1px">Gebaeude 0815&nbsp; (Z2701)</div>
<div class="tt" style="left:32.7px;top:36.8px">Buerogebaeude&nbsp; (Z2699)</div>
<div class="tt" style="left:41.0px;top:45.3px">Keller&nbsp; (Z613)</div>
<div class="tt" style="left:50.0px;top:53.8px">001&nbsp; (Z2)</div>
<div class="tt" style="left:50.0px;top:62.3px">002&nbsp; (Z4)</div>
<div class="tt" style="left:50.0px;top:70.8px">003&nbsp; (Z6)</div>
<div class="tt" style="left:50.0px;top:79.2px">004&nbsp; (Z8)</div>
<div class="tt" style="left:50.0px;top:87.7px">005&nbsp; (Z10)</div>
<div class="tt" style="left:50.0px;top:96.2px">006&nbsp; (Z12)</div>
<div class="tt" style="left:50.0px;top:104.7px">007&nbsp; (Z14)</div>
<div class="tt" style="left:50.0px;top:113.2px">008&nbsp; (Z16)</div>
<div class="tt" style="left:50.0px;top:121.7px">010&nbsp; (Z18)</div>
<div class="tt" style="left:50.0px;top:130.2px">011&nbsp; (Z20)</div>
<div class="tt" style="left:50.0px;top:138.7px">012&nbsp; (Z22)</div>
<div class="tt" style="left:50.0px;top:147.2px">013&nbsp; (Z24)</div>
<div class="tt" style="left:50.0px;top:155.7px">014&nbsp; (Z26)</div>
<div class="tt" style="left:50.0px;top:164.1px">015&nbsp; (Z28)</div>
<div class="tt" style="left:50.0px;top:172.6px">017&nbsp; (Z30)</div>
<div class="tt" style="left:50.0px;top:181.1px">016&nbsp; (Z32)</div>
<div class="tt" style="left:50.0px;top:189.6px">009&nbsp; (Z34)</div>
<div class="tt" style="left:50.0px;top:198.1px">Objekt-002&nbsp; (Z36)</div>
<div class="tt" style="left:50.0px;top:206.6px">Objekt-002&nbsp; (Z38)</div>
<div class="tt" style="left:50.0px;top:215.1px">Objekt-002&nbsp; (Z40)</div>
<div class="tt" style="left:50.0px;top:223.6px">Objekt-002&nbsp; (Z42)</div>
<div class="tt" style="left:50.0px;top:232.1px">Objekt-002&nbsp; (Z44)</div>
<div class="tt" style="left:50.0px;top:240.6px">Objekt-002&nbsp; (Z46)</div>
<div class="tt" style="left:50.0px;top:249.0px">Objekt-002&nbsp; (Z48)</div>
<div class="tt" style="left:50.0px;top:257.5px">Objekt-002&nbsp; (Z50)</div>
<div class="tt" style="left:50.0px;top:266.0px">Objekt-002&nbsp; (Z52)</div>
<div class="tt" style="left:50.0px;top:274.5px">Objekt-002&nbsp; (Z54)</div>
<div class="tt" style="left:50.0px;top:283.0px">Objekt-006&nbsp; (Z56)</div>
<div class="tt" style="left:50.0px;top:291.5px">Objekt-006&nbsp; (Z58)</div>
<div class="tt" style="left:50.0px;top:300.0px">Objekt-006&nbsp; (Z60)</div>
<div class="tt" style="left:50.0px;top:308.5px">Objekt-006&nbsp; (Z62)</div>
<div class="tt" style="left:50.0px;top:317.0px">Objekt-006&nbsp; (Z64)</div>
<div class="tt" style="left:50.0px;top:325.5px">Objekt-006&nbsp; (Z66)</div>
<div class="tt" style="left:50.0px;top:333.9px">Objekt-006&nbsp; (Z68)</div>
<div class="tt" style="left:50.0px;top:342.4px">Objekt-006&nbsp; (Z70)</div>
<div class="tt" style="left:50.0px;top:350.9px">Objekt-006&nbsp; (Z72)</div>
<div class="tt" style="left:50.0px;top:359.4px">Objekt-006&nbsp; (Z74)</div>
<div class="tt" style="left:50.0px;top:367.9px">Objekt-006&nbsp; (Z76)</div>
<div class="tt" style="left:50.0px;top:376.4px">Objekt-006&nbsp; (Z78)</div>
</div>
<div class="tt" style="left:5.3px;top:395.6px;color:#222">Select</div>
<div class="abs" style="left:22.2px;top:393.5px;width:120.4px;height:12.4px;background:#fff;border:0.8px solid #a9bbd8"></div><div class="abs" style="left:135.6px;top:394.4px;width:6.2px;height:10.6px;background:#ececec"></div>
<svg class="abs" style="left:134px;top:396px" width="8" height="8" viewBox="0 0 8 8"><path d="M2.2 2.6h4.4l-2.2 2.8z" fill="#1a1a1a"/></svg>
<svg class="abs" style="left:143px;top:392px" width="15" height="15" viewBox="143 392 15 15"><rect x="144.5" y="393.5" width="11.1" height="11.8" rx="1.5" fill="#fcfcfc" stroke="#e2e2e2" stroke-width="0.5"/><rect x="146.9" y="396.8" width="6" height="6.8" fill="#fff" stroke="#333" stroke-width="0.8"/><path d="M153.4 394.8l0.7 1.5 1.5 0.2-1.1 1.1 0.3 1.6-1.4-0.8-1.4 0.8 0.3-1.6-1.1-1.1 1.5-0.2z" fill="#f0b810"/></svg>
<div class="abs" style="left:159.6px;top:2px;width:262px;height:15.2px;background:#f0f0f0"></div>
<svg class="abs" style="left:156px;top:0" width="6" height="20" viewBox="156 0 6 20"><rect x="158.7" y="1.8" width="1" height="15.3" fill="#a0a0a0"/></svg>
<div class="btn" style="left:161.3px;top:3.3px;width:13.4px;height:12.2px;background:#cce4f7"></div>
<svg class="abs" style="left:164.5px;top:5px" width="8" height="10" viewBox="0 0 8 10"><path d="M1 0.8V7.6L2.8 6L4 8.8L5.2 8.3L4 5.6H6.2Z" fill="#fff" stroke="#111" stroke-width="0.8"/></svg>
<div class="abs" style="left:176.8px;top:4.5px;width:77.2px;height:10.7px;border:0.8px solid #c4c4c4;border-radius:1.5px;background:#f1f1f1"></div>
<svg class="abs" style="left:0;top:0" width="609" height="20" viewBox="0 0 609 20">
<path d="M180.2 8.2h4v3.8h-4zM181.6 7h4v3.8" stroke="#333" stroke-width="0.7" fill="none"/>
<path d="M196.4 7.4h5.4v3h-3v2.2h-2.4z" stroke="#444" stroke-width="0.7" fill="none"/>
<path d="M210.8 9.4l3-2h2.4l-3 2zM210.8 11.8l3-2h2.4l-3 2z" stroke="#333" stroke-width="0.7" fill="none"/>
<path d="M226.4 12l5.2-5" stroke="#555" stroke-width="0.7"/>
<circle cx="243" cy="9.8" r="1" fill="#111"/>
<text x="188.2" y="12" font-size="5.4" font-family="Liberation Sans, sans-serif" fill="#3a2a6a" text-anchor="middle">0</text>
<text x="203.8" y="12" font-size="5.4" font-family="Liberation Sans, sans-serif" fill="#3a2a6a" text-anchor="middle">0</text>
<text x="218.8" y="12" font-size="5.4" font-family="Liberation Sans, sans-serif" fill="#3a2a6a" text-anchor="middle">0</text>
<text x="234.8" y="12" font-size="5.4" font-family="Liberation Sans, sans-serif" fill="#3a2a6a" text-anchor="middle">0</text>
<text x="249.6" y="12" font-size="5.4" font-family="Liberation Sans, sans-serif" fill="#3a2a6a" text-anchor="middle">0</text>
</svg>
<div class="btn" style="left:256.0px;top:3.4px;width:11.8px;height:12px;background:#cce4f7"></div>
<div class="btn" style="left:272.0px;top:3.4px;width:11.8px;height:12px"></div>
<div class="btn" style="left:285.7px;top:3.4px;width:11.8px;height:12px"></div>
<div class="btn" style="left:299.5px;top:3.4px;width:11.8px;height:12px"></div>
<div class="btn" style="left:314.0px;top:3.4px;width:11.8px;height:12px"></div>
<div class="btn" style="left:329.4px;top:3.4px;width:11.8px;height:12px"></div>
<div class="btn" style="left:345.5px;top:3.4px;width:11.8px;height:12px"></div>
<div class="btn" style="left:359.3px;top:3.4px;width:11.8px;height:12px"></div>
<div class="btn" style="left:375.4px;top:3.4px;width:11.8px;height:12px"></div>
<div class="btn" style="left:388.8px;top:3.4px;width:11.8px;height:12px"></div>
<div class="btn" style="left:403.0px;top:3.4px;width:11.8px;height:12px"></div>
<svg class="abs" style="left:0;top:0" width="609" height="20" viewBox="0 0 609 20">
<path d="M258.4 6h7" stroke="#0a1a8a" stroke-width="1.1"/><path d="M261.9 7l2.9 3h-1.9v3.2h-2v-3.2h-1.9z" fill="#0a1a8a"/>
<rect x="274.4" y="5.6" width="6.8" height="7.8" fill="#fff" stroke="#333" stroke-width="0.8"/><rect x="279" y="4.4" width="3.4" height="3.2" fill="#f3c316"/>
<circle cx="290" cy="10.8" r="2" fill="#1a30c0"/><circle cx="293" cy="10.8" r="2" fill="#20a030"/><circle cx="291.5" cy="8.6" r="2" fill="#c02020"/><rect x="293.6" y="4.6" width="2.6" height="2.6" fill="#f3c316"/>
<path d="M302 8.4c1-2.6 5-2.6 6.4-1.2M302 11c2-2 4.6-1.6 6.6-3M302.6 13c2-1.4 4-0.6 5.8-2.4" stroke="#3a78b8" stroke-width="1.1" fill="none"/><path d="M302.4 9.6c2-1.6 4.4-1 6-2.4M303 12c2-1.4 3.6-0.8 5.4-2.2" stroke="#d8b020" stroke-width="0.9" fill="none"/>
<path d="M316.6 6l6.6 7M323.2 6l-6.6 7" stroke="#e01818" stroke-width="1.3"/>
<text x="335.3" y="11.6" font-size="4.2" font-weight="bold" font-family="Liberation Sans, sans-serif" fill="#222" text-anchor="middle">ALL</text>
<circle cx="348.6" cy="9.8" r="1.7" fill="none" stroke="#222" stroke-width="0.8"/><circle cx="354.2" cy="9.8" r="1.7" fill="none" stroke="#222" stroke-width="0.8"/><path d="M350.3 9.8h2.2" stroke="#222" stroke-width="0.7"/>
<ellipse cx="365.2" cy="9.6" rx="3.2" ry="2.6" fill="none" stroke="#222" stroke-width="0.9"/><path d="M363 12.6l2.4-1" stroke="#222" stroke-width="0.8"/>
<rect x="377.4" y="5.6" width="5" height="5" fill="none" stroke="#222" stroke-width="0.8"/><rect x="379.6" y="7.8" width="5" height="5" fill="#fcfcfc" stroke="#222" stroke-width="0.8"/>
<path d="M394.5 5.9L399.3 8.4L397.4 13.2H391.2L389.9 8.6Z" fill="none" stroke="#222" stroke-width="0.8"/><path d="M393.8 5.2h1.4v1.4h-1.4zM398.6 7.7h1.4v1.4h-1.4zM396.7 12.5h1.4v1.4h-1.4zM390.5 12.5h1.4v1.4h-1.4zM389.2 7.9h1.4v1.4h-1.4z" fill="#222"/>
<rect x="405.6" y="6" width="6.6" height="6.8" rx="1.6" fill="#333"/><circle cx="408.9" cy="9.4" r="1.6" fill="#111"/>
<path d="M417 11.4h2.4l-1.2 1.6z" fill="#222"/>
</svg>
<svg class="abs" style="left:158px;top:38px" width="20" height="64" viewBox="158 38 20 64">
<rect x="160.7" y="40.6" width="13" height="12.9" rx="1.6" fill="#fdfdfd" stroke="#e6e6e6" stroke-width="0.6"/>
<rect x="160.9" y="54.4" width="12.8" height="15.2" rx="1.6" fill="#fffdf8" stroke="#eaa646" stroke-width="1"/>
<rect x="160.7" y="70.9" width="13" height="12.0" rx="1.6" fill="#fdfdfd" stroke="#e6e6e6" stroke-width="0.6"/>
<rect x="160.7" y="85.3" width="13" height="12.7" rx="1.6" fill="#fdfdfd" stroke="#e6e6e6" stroke-width="0.6"/>
<path d="M164.8 43.6v8.2M164.8 47.6h2.4" stroke="#1a1aa0" stroke-width="0.9" fill="none"/><rect x="163.6" y="42.8" width="2.6" height="2" fill="#fff" stroke="#1a1aa0" stroke-width="0.8"/><rect x="167" y="46.4" width="2.8" height="2.2" fill="#fff" stroke="#1a1aa0" stroke-width="0.8"/><rect x="163.6" y="50" width="2.6" height="2" fill="#fff" stroke="#1a1aa0" stroke-width="0.8"/>
<circle cx="166.6" cy="58.4" r="1" fill="#e00"/><path d="M166.6 59v3.4M164 62.6h5.6M164 62.6v2.2M169.6 62.6v2.2" stroke="#1a1aa0" stroke-width="0.9" fill="none"/><rect x="163" y="60.4" width="1.5" height="1.5" fill="#e00"/><rect x="169" y="60.4" width="1.5" height="1.5" fill="#e00"/><rect x="163.2" y="64.2" width="1.6" height="1.6" fill="#00c"/><rect x="168.8" y="64.2" width="1.6" height="1.6" fill="#00c"/>
<circle cx="165.4" cy="78.4" r="2.5" fill="#16a030"/><circle cx="169" cy="78.4" r="2.5" fill="#1a30d0"/><circle cx="167.2" cy="75.2" r="2.5" fill="#d01818"/><circle cx="167.2" cy="77.4" r="1" fill="#222"/>
<rect x="163" y="87.4" width="6" height="8.8" fill="#fff" stroke="#444" stroke-width="0.7"/><path d="M163.6 89h3M163.6 95h3" stroke="#666" stroke-width="0.5"/><circle cx="167.4" cy="92" r="2.5" fill="#e8eef8" stroke="#333" stroke-width="0.8"/><path d="M169.2 94l2.4 2.6" stroke="#2a3ac0" stroke-width="1.2"/>
</svg>
<div class="abs" style="left:588.1px;top:1.4px;width:17.8px;height:407px;background:#f0f0f0"></div>

<div class="abs" style="left:590.5px;top:4.4px;width:13px;height:1.4px;background:repeating-linear-gradient(90deg,#bbb 0 0.8px,transparent 0.8px 1.6px)"></div>
<div class="abs" style="left:590.2px;top:10px;width:12.6px;height:9.6px;background:#c4dcf8;border:0.8px solid #4a90e0"></div>
<svg class="abs" style="left:588px;top:0" width="18" height="290" viewBox="588 0 18 290">
<path d="M591.6 13h3M591.6 15.4h3M591.6 17.8h3M597.6 13h3.6M597.6 15.4h3.6M597.6 17.8h3.6" stroke="#111" stroke-width="1.1" stroke-dasharray="1.1 0.7"/><path d="M594.6 13h2M594.6 15.4h2M594.6 17.8h2" stroke="#d060d0" stroke-width="0.8"/>
<path d="M591.4 25.4c3 2 4 4 5.2 5.6c1.2-1.6 2.2-3.6 5.2-5.6M591.4 36c3-2 4-4 5.2-5.6c1.2 1.6 2.2 3.6 5.2 5.6" stroke="#d02030" stroke-width="0.9" fill="none"/><path d="M596.6 27v8" stroke="#223" stroke-width="1.6"/><path d="M592 30.6h9.4" stroke="#d060a0" stroke-width="0.6"/>
<path d="M591 47l7-6.6 4.4 2-7 6.6z" fill="#a8b4f4" stroke="#3a4ad0" stroke-width="0.6"/><path d="M592.6 45.4l4.4 2M594.4 43.8l4.4 2M596.2 42.2l4.4 2" stroke="#3a4ad0" stroke-width="0.4"/><path d="M593 42l8 6M596.5 40v11" stroke="#3a4ad0" stroke-width="0.7"/><rect x="595" y="44.4" width="3.6" height="2.2" fill="#e02020"/>
<ellipse cx="594.6" cy="61.4" rx="2.6" ry="4" fill="none" stroke="#3a4ad0" stroke-width="0.8"/><path d="M594.6 57v9" stroke="#3a4ad0" stroke-width="0.6"/><rect x="599.2" y="58.8" width="2.4" height="3" fill="#223"/><ellipse cx="600.4" cy="66.4" rx="2.4" ry="1.6" fill="#9cc4f0" stroke="#4a80d0" stroke-width="0.5"/>
<path d="M591 77.0l5-2.6 6 1.8-5 2.8z" fill="#dfe8fb" stroke="#4a6ad8" stroke-width="0.6"/><path d="M593.5 75.7l6 1.9M596 75.2l-5 2.7M598.6 75.9l-5 2.7" stroke="#4a6ad8" stroke-width="0.4" fill="none"/><path d="M591 81.2l5-2.6 6 1.8-5 2.8z" fill="#dfe8fb" stroke="#4a6ad8" stroke-width="0.6"/><path d="M593.5 79.9l6 1.9M596 79.4l-5 2.7M598.6 80.1l-5 2.7" stroke="#4a6ad8" stroke-width="0.4" fill="none"/><path d="M600.6 73.6c2 1 2 4 0.4 5.6" stroke="#111" stroke-width="1" fill="none"/>
<path d="M591 93.5l5-2.6 6 1.8-5 2.8z" fill="#fbe0f4" stroke="#e048c8" stroke-width="0.6"/><path d="M593.5 92.2l6 1.9M596 91.7l-5 2.7M598.6 92.4l-5 2.7" stroke="#e048c8" stroke-width="0.4" fill="none"/><path d="M591 97.7l5-2.6 6 1.8-5 2.8z" fill="#fbe0f4" stroke="#e048c8" stroke-width="0.6"/><path d="M593.5 96.4l6 1.9M596 95.9l-5 2.7M598.6 96.6l-5 2.7" stroke="#e048c8" stroke-width="0.4" fill="none"/><path d="M594.8 90c1-1.6 3-1.6 4 0" stroke="#111" stroke-width="1.1" fill="none"/>
<path d="M591 108.5l5-2.6 6 1.8-5 2.8z" fill="#fbe0f4" stroke="#e048c8" stroke-width="0.6"/><path d="M593.5 107.2l6 1.9M596 106.7l-5 2.7M598.6 107.4l-5 2.7" stroke="#e048c8" stroke-width="0.4" fill="none"/><path d="M591 112.7l5-2.6 6 1.8-5 2.8z" fill="#fbe0f4" stroke="#e048c8" stroke-width="0.6"/><path d="M593.5 111.4l6 1.9M596 110.9l-5 2.7M598.6 111.6l-5 2.7" stroke="#e048c8" stroke-width="0.4" fill="none"/><path d="M600.6 105.6c2 1 2 4 0.4 5.6" stroke="#111" stroke-width="1" fill="none"/><path d="M593 112l6-2" stroke="#3a4ad0" stroke-width="0.8"/>
<path d="M591 125.5l5-2.6 6 1.8-5 2.8z" fill="#dfe8fb" stroke="#4a6ad8" stroke-width="0.6"/><path d="M593.5 124.2l6 1.9M596 123.7l-5 2.7M598.6 124.4l-5 2.7" stroke="#4a6ad8" stroke-width="0.4" fill="none"/><path d="M591 129.7l5-2.6 6 1.8-5 2.8z" fill="#dfe8fb" stroke="#4a6ad8" stroke-width="0.6"/><path d="M593.5 128.4l6 1.9M596 127.9l-5 2.7M598.6 128.6l-5 2.7" stroke="#4a6ad8" stroke-width="0.4" fill="none"/><path d="M600.6 122.6c2 1 2 4 0.4 5.6" stroke="#111" stroke-width="1" fill="none"/><path d="M593 131l6-2" stroke="#20a040" stroke-width="0.8"/>
<path d="M591.6 143.6c2-4 4-3 5.4-1.6s3 1.6 5-1.6" stroke="#111" stroke-width="0.9" fill="none"/>
<path d="M591 156.0l5-2.6 6 1.8-5 2.8z" fill="#fbd0f0" stroke="#e040c0" stroke-width="0.6"/><path d="M593.5 154.7l6 1.9M596 154.2l-5 2.7M598.6 154.9l-5 2.7" stroke="#e040c0" stroke-width="0.4" fill="none"/><path d="M591 160.2l5-2.6 6 1.8-5 2.8z" fill="#fbd0f0" stroke="#e040c0" stroke-width="0.6"/><path d="M593.5 158.9l6 1.9M596 158.4l-5 2.7M598.6 159.1l-5 2.7" stroke="#e040c0" stroke-width="0.4" fill="none"/><path d="M600.6 152.6c2 1 2 4 0.4 5.6" stroke="#111" stroke-width="1" fill="none"/>
<path d="M591 175l6-4.6 5.6 2-6 4.8z" fill="#fde8f4" stroke="#d040a0" stroke-width="0.7"/><path d="M594 172.8l5.6 2.2M596.8 170.6l-2.6 6.4" stroke="#d040a0" stroke-width="0.5"/>
<path d="M591 191l4-2.4 7 2-4 2.8z" fill="#f070d0" stroke="#c030a0" stroke-width="0.6"/><rect x="593" y="185" width="1.6" height="5" fill="#e020a0"/><rect x="596.4" y="186.4" width="2" height="4.6" fill="#223"/><path d="M599 187c2 0 2.6 2 1.6 3.6" stroke="#111" stroke-width="0.9" fill="none"/>
<path d="M591 209l5-3.4 6 1.6-5 3.6z" fill="#c0c8f8" stroke="#5060d0" stroke-width="0.6"/><path d="M592 202l8 8M600 202l-8 8" stroke="#6a70d0" stroke-width="0.8"/><path d="M593 205.6h7" stroke="#e040c0" stroke-width="0.7"/>
<path d="M590.6 215.6l4.4 4.2M595 215.6l-4.4 4.2" stroke="#e01818" stroke-width="1"/><path d="M591.6 223.6l4.4-3 6 1.6-4.4 3.4z" fill="#f0d020" stroke="#222" stroke-width="0.7"/><rect x="595" y="218.6" width="3.6" height="3.4" fill="#f0d020" stroke="#222" stroke-width="0.6"/>
<path d="M591 238l5.4-3.6 6 1.8-5.4 3.8z" fill="#fde8f4" stroke="#e040a0" stroke-width="0.7"/><path d="M592 233.6c0.6-2 3-2.6 4.6-1.6" stroke="#111" stroke-width="1" fill="none"/><circle cx="596.6" cy="236.6" r="1.3" fill="none" stroke="#e02020" stroke-width="0.6"/>
<path d="M591 252.6l5.4-3.6 6 1.8-5.4 3.8z" fill="#fde8f4" stroke="#e040a0" stroke-width="0.7"/><path d="M595 255l3 3M598 255l-3 3" stroke="#3a3ab0" stroke-width="0.8"/><path d="M597 257.6l2.4 1.6" stroke="#111" stroke-width="0.9"/>
<path d="M592 266l4.6-3.4v9.6l-4.6 3.2z" fill="#f8b0e8" stroke="#d040c0" stroke-width="0.7"/><path d="M596.6 262.6l5 5-5 4.6" fill="#f0a0e0" stroke="#d040c0" stroke-width="0.7"/>
</svg>
<svg class="abs" style="left:545px;top:305px" width="45" height="90" viewBox="545 305 45 90">
<rect x="552.3" y="311.4" width="29.8" height="33" rx="1.4" fill="#a9a9a9" stroke="#333" stroke-width="0.8"/>
<rect x="557.8" y="326.8" width="10.2" height="8.8" fill="#00ee00"/>
<text x="571.6" y="332" font-size="7.6" font-family="Liberation Sans, sans-serif" fill="#222">2</text>
<text x="558" y="360.8" font-size="7.6" font-family="Liberation Sans, sans-serif" fill="#111">2</text>
<text x="575.4" y="376.2" font-size="7" font-family="Liberation Sans, sans-serif" fill="#222">Y</text>
<text x="572" y="390" font-size="7" font-family="Liberation Sans, sans-serif" fill="#222">X</text>
<path d="M558.2 382.4V368.4" stroke="#1a30e0" stroke-width="1.7"/><path d="M556 369.4l2.2-4.6 2.2 4.6z" fill="#1a30e0"/>
<path d="M558.4 382l13.6-6" stroke="#20c030" stroke-width="0.8"/>
<path d="M560.4 374.2l6-3 5.8 2.2v7l-6 3.4-5.8-2.6z" fill="#dcdfdc" fill-opacity="0.9" stroke="#a8aea8" stroke-width="0.5"/><path d="M560.4 374.2l5.8 2.4 6-3M566.2 376.6v7.2" stroke="#b0b6b0" stroke-width="0.5" fill="none"/>
<path d="M558.2 382.2l8.6 3.8" stroke="#e01010" stroke-width="1.9"/><path d="M566 383.6l4.2 3.8-5.4 0.4z" fill="#e01010"/>
<path d="M577.6 378.6l5.8 5.2-2.7 0.3 1.5 3.2-1.5 0.7-1.5-3.2-1.9 1.9z" fill="#f0a010"/>
</svg>
<div class="abs" style="left:2px;top:408.3px;width:603.3px;height:11.5px;background:#f0f0f0;border-top:0.7px solid #d8d8d8"></div>
<div class="sb" style="left:375.6px">896</div>
<div class="sb" style="left:403.2px">128</div>
<div class="sb" style="left:423.2px">1988</div>
<div class="sb" style="left:444.6px">3941</div>
<div class="sb" style="left:467.2px">5194</div>
<div class="sb" style="left:487.6px">9422</div>
<div class="sb" style="left:505.4px">Units: <span style="color:#1a3ad0;text-decoration:underline">m</span></div>
<div class="sb" style="left:529.6px">Tol.: <span style="color:#1a3ad0;text-decoration:underline">Auto</span></div>
<div class="abs" style="left:568px;top:408.6px;width:12px;height:11px;background:#ffff00"></div>
<div class="sb" style="left:572.8px;color:#1a3ad0;font-weight:bold">i</div>
<div class="sb" style="left:582px">Z2701</div>
<div class="abs" style="left:503.6px;top:409.6px;width:0.7px;height:9px;background:#c4c4c4"></div>
<div class="abs" style="left:527.4px;top:409.6px;width:0.7px;height:9px;background:#c4c4c4"></div>
<div class="abs" style="left:556.6px;top:409.6px;width:0.7px;height:9px;background:#c4c4c4"></div>
<svg class="abs" style="left:360px;top:408px" width="246" height="12" viewBox="360 408 246 12">
<circle cx="368.6" cy="410.6" r="0.9" fill="#e00"/><path d="M368.8 411v3M366.8 414h4.4M366.8 414v2M371.2 414v2" stroke="#1a1aa0" stroke-width="0.8" fill="none"/><rect x="366" y="415.4" width="1.6" height="1.6" fill="#e00"/><rect x="370.4" y="415.4" width="1.6" height="1.6" fill="#00c"/>
<circle cx="391.2" cy="414" r="2.4" fill="#333"/><circle cx="390.6" cy="413.4" r="0.9" fill="#e8c040"/>
<path d="M397 415.4l1.6-3h2.6l-1.6 3z" stroke="#333" stroke-width="0.7" fill="none"/>
<path d="M416.6 411.4h3.6v2h-2v2.6h-1.6z" stroke="#333" stroke-width="0.7" fill="none"/>
<path d="M439.4 415.4c0-3 3-4 3.4-2s-2 3-1 1" stroke="#333" stroke-width="0.7" fill="none"/>
<path d="M461.6 416l3.4-4" stroke="#444" stroke-width="0.7"/>
<circle cx="484.6" cy="414" r="0.9" fill="#111"/>
<path d="M561.8 416V410.6" stroke="#1a30e0" stroke-width="1"/><path d="M561.8 415.6l-2.6 2" stroke="#e01010" stroke-width="0.9"/><path d="M561.8 415.6l2.8 1.6" stroke="#10c020" stroke-width="0.9"/>
<circle cx="599.8" cy="411" r="0.9" fill="#e00"/><path d="M600 411.6v5M600 413.6h3.4M600 416.4h3.4M603.4 412.6v5" stroke="#222" stroke-width="0.7" fill="none"/>
</svg>
<svg class="abs" style="left:0;top:0" width="609" height="422" viewBox="0 0 609 422">
<rect x="606" y="1.4" width="1.45" height="419.4" fill="#15246a"/>
<path d="M605.4 420.8l2-2.6v2.6z" fill="#15246a"/>
<rect x="0" y="0" width="607.4" height="1.8" fill="#000"/>
<rect x="0" y="0" width="1.9" height="422" fill="#000"/>
<rect x="0" y="420" width="605.6" height="2" fill="#000"/>
<rect x="0" y="0" width="1" height="1" fill="#fff"/>
</svg>
</body></html>
